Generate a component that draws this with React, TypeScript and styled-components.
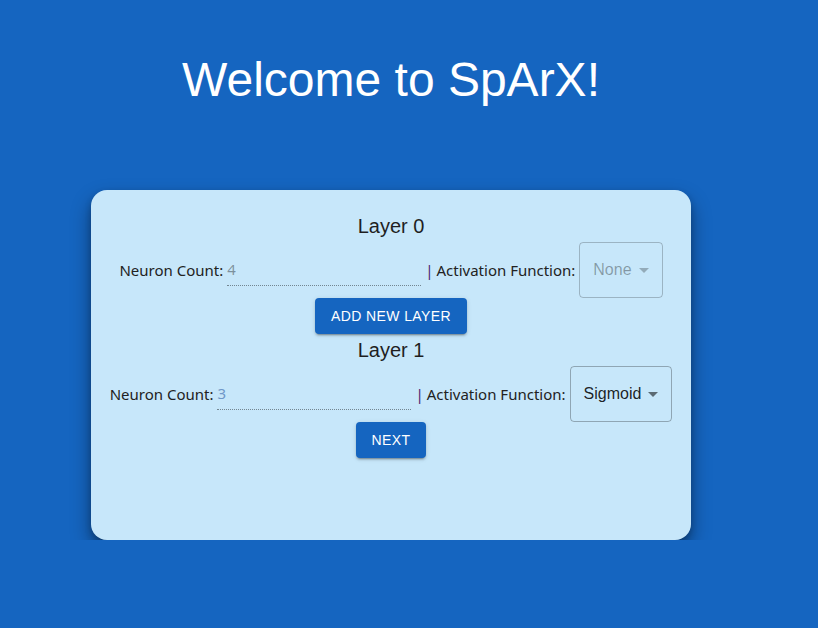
import React from "react";
import styled, { createGlobalStyle } from "styled-components";

const Global = createGlobalStyle`
  html, body { margin: 0; padding: 0; background: #1565c0; }
  body { font-family: "Liberation Sans", Arial, sans-serif; }
`;

const Page = styled.div`
  width: 600px;
  margin-left: 91px;
  padding-top: 52px;
  display: flex;
  flex-direction: column;
  align-items: center;
`;

const Title = styled.h1`
  margin: 0;
  font-family: "Liberation Sans", Arial, sans-serif;
  font-weight: 400;
  font-size: 48px;
  line-height: 56px;
  color: #ffffff;
`;

const Card = styled.div`
  margin-top: 82px;
  width: 600px;
  height: 350px;
  box-sizing: border-box;
  background: #c7e7fa;
  border-radius: 16px;
  box-shadow: 0 10px 20px rgba(0, 0, 0, 0.4), 0 3px 6px rgba(0, 0, 0, 0.2);
  display: flex;
  flex-direction: column;
  align-items: center;
  padding-top: 24px;
`;

const LayerTitle = styled.div<{ $mt?: number }>`
  margin-top: ${(p) => p.$mt ?? 0}px;
  font-family: "Liberation Sans", Arial, sans-serif;
  font-size: 20px;
  line-height: 24px;
  color: #1f1f1f;
`;

const Row = styled.div`
  display: flex;
  align-items: center;
  margin-top: 4px;
  font-family: "Noto Sans", "Open Sans", sans-serif;
  font-size: 15px;
  color: #222;
`;

const Label = styled.span`
  white-space: nowrap;
`;

const Input = styled.div<{ $muted?: boolean }>`
  width: 194px;
  margin-left: 4px;
  height: 32px;
  box-sizing: border-box;
  padding: 4px 0 5px;
  border-bottom: 1px dotted rgba(0, 0, 0, 0.42);
  font-family: "Noto Sans", "Open Sans", sans-serif;
  font-size: 15px;
  line-height: 22px;
  color: ${(p) => (p.$muted ? "rgba(0,0,0,0.38)" : "#6f97c8")};
`;

const Bar = styled.span`
  color: #4b2470;
  margin: 0 3px 0 4px;
`;

const Select = styled.div<{ $disabled?: boolean }>`
  margin-left: 4px;
  height: 56px;
  box-sizing: border-box;
  display: flex;
  align-items: center;
  padding: 0 6px 0 13px;
  border: 1px solid ${(p) => (p.$disabled ? "rgba(0,0,0,0.22)" : "rgba(0,0,0,0.28)")};
  border-radius: 4px;
  font-family: "Liberation Sans", Arial, sans-serif;
  font-size: 16px;
  color: ${(p) => (p.$disabled ? "rgba(0,0,0,0.34)" : "rgba(0,0,0,0.87)")};
  svg {
    fill: ${(p) => (p.$disabled ? "rgba(0,0,0,0.26)" : "rgba(0,0,0,0.54)")};
  }
`;

const Button = styled.button`
  height: 36px;
  padding: 0 16px;
  border: none;
  border-radius: 4px;
  background: #1565c0;
  color: #fff;
  font-family: "Liberation Sans", Arial, sans-serif;
  font-weight: 400;
  font-size: 14px;
  letter-spacing: 0.4px;
  text-transform: uppercase;
  box-shadow: 0 3px 1px -2px rgba(0,0,0,0.2), 0 2px 2px 0 rgba(0,0,0,0.14), 0 1px 5px 0 rgba(0,0,0,0.12);
  cursor: pointer;
`;

const Arrow = () => (
  <svg width="24" height="24" viewBox="0 0 24 24">
    <path d="M7 10l5 5 5-5z" />
  </svg>
);

export default function App() {
  return (
    <>
      <Global />
      <Page>
        <Title>Welcome to SpArX!</Title>
        <Card>
          <LayerTitle>Layer 0</LayerTitle>
          <Row>
            <Label>Neuron Count:</Label>
            <Input $muted>4</Input>
            <Bar>|</Bar>
            <Label>Activation Function:</Label>
            <Select $disabled>
              None
              <Arrow />
            </Select>
          </Row>
          <Button>Add new layer</Button>
          <LayerTitle $mt={4}>Layer 1</LayerTitle>
          <Row>
            <Label>Neuron Count:</Label>
            <Input>3</Input>
            <Bar>|</Bar>
            <Label>Activation Function:</Label>
            <Select>
              Sigmoid
              <Arrow />
            </Select>
          </Row>
          <Button>Next</Button>
        </Card>
      </Page>
    </>
  );
}
